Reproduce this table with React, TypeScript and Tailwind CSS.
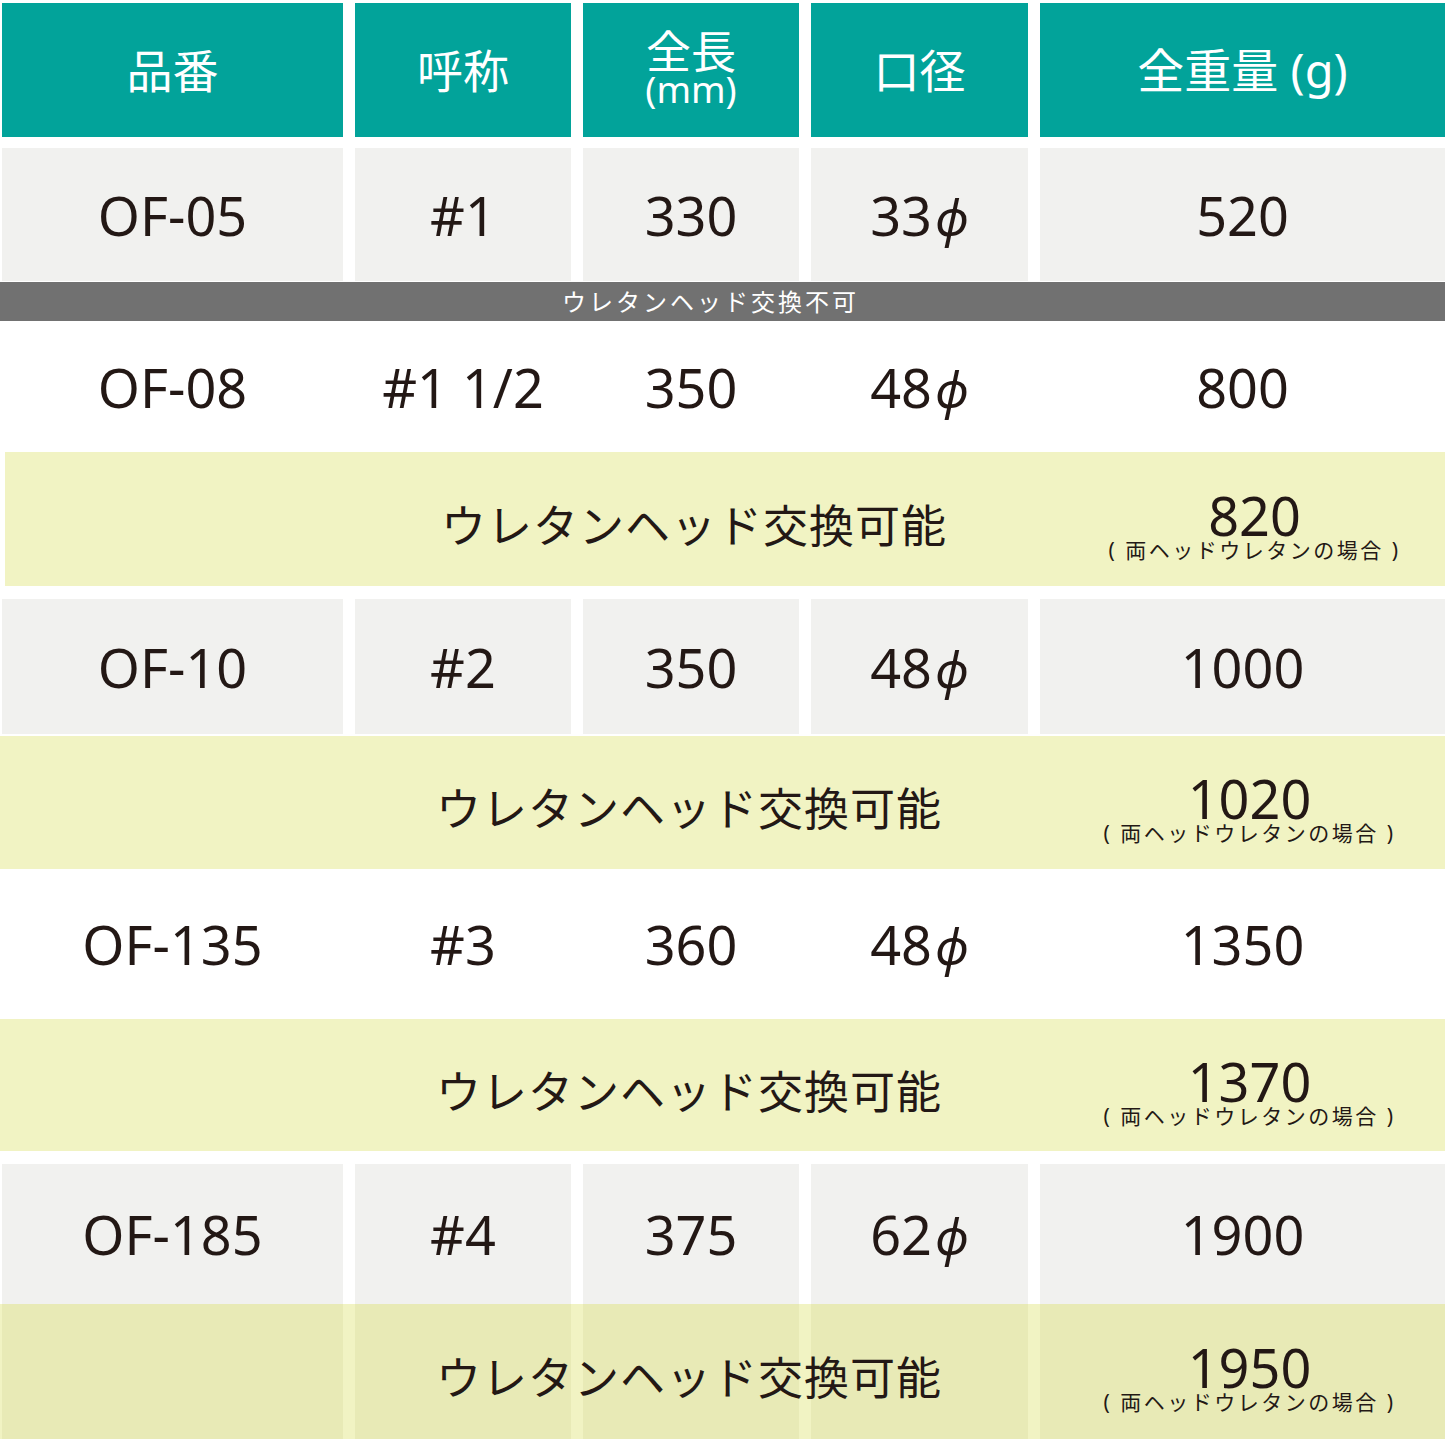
import React from 'react';

const FONT = 'font-["Noto_Sans","Noto_Sans_CJK_JP",sans-serif]';
const COLS = 'grid grid-cols-[341px_216px_216px_217px_405px] gap-x-[12px] pl-[2px]';
const INK = 'text-[#231815]';

interface SpecRow {
  code: string;
  size: string;
  length: string;
  bore: string;
  weight: string;
  shaded: boolean;
  height: string;
}

const Phi: React.FC<{ value: string }> = ({ value }) => (
  <span>
    {value}
    <span className="italic ml-[3px] text-[50px]">ϕ</span>
  </span>
);

const DataRow: React.FC<{ row: SpecRow }> = ({ row }) => {
  const cell = `flex items-center justify-center text-[54px] leading-none ${row.shaded ? 'bg-[#f1f1ef]' : ''}`;
  return (
    <div className={`${COLS} ${row.height}`}>
      <div className={cell}>{row.code}</div>
      <div className={cell}>
        <span className="whitespace-pre">{row.size}</span>
      </div>
      <div className={cell}>{row.length}</div>
      <div className={cell}>
        <Phi value={row.bore} />
      </div>
      <div className={cell}>{row.weight}</div>
    </div>
  );
};

const Weight: React.FC<{ value: string }> = ({ value }) => (
  <div className="flex flex-col items-center pl-[14px] pt-[14px]">
    <span className="text-[54px] leading-[46px]">{value}</span>
    <span className="text-[21px] leading-[22px] tracking-[2.5px] mt-[1px] whitespace-pre">( 両ヘッドウレタンの場合 )</span>
  </div>
);

const UrethaneBand: React.FC<{ weight: string; className?: string; dark?: boolean }> = ({ weight, className, dark }) => (
  <div className={`bg-[#f1f3c3] ${className ?? ''}`}>
    <div className={`${COLS} h-full`}>
      {dark && (
        <>
          <div className="row-start-1 col-start-1 bg-[#e8eab6]" />
          <div className="row-start-1 col-start-2 bg-[#e8eab6]" />
          <div className="row-start-1 col-start-3 bg-[#e8eab6]" />
          <div className="row-start-1 col-start-4 bg-[#e8eab6]" />
          <div className="row-start-1 col-start-5 bg-[#e8eab6]" />
        </>
      )}
      <div className="row-start-1 col-start-1 col-span-4 flex items-center justify-center pl-[348px] pt-[12px]">
        <span className="text-[45px] leading-none tracking-[1px]">ウレタンヘッド交換可能</span>
      </div>
      <div className="row-start-1 col-start-5 flex items-center justify-center">
        <Weight value={weight} />
      </div>
    </div>
  </div>
);

export default function App() {
  return (
    <div className={`w-[1445px] h-[1445px] bg-white pt-[3px] ${FONT} ${INK}`}>
      {/* header */}
      <div className={`${COLS} h-[134px] text-white`}>
        <div className="bg-[#02a39a] flex items-center justify-center text-[46px] leading-none">品番</div>
        <div className="bg-[#02a39a] flex items-center justify-center text-[46px] leading-none">呼称</div>
        <div className="bg-[#02a39a] flex flex-col items-center justify-center">
          <span className="text-[45px] leading-[38px]">全長</span>
          <span className="text-[37px] leading-[36px]">(mm)</span>
        </div>
        <div className="bg-[#02a39a] flex items-center justify-center text-[46px] leading-none">口径</div>
        <div className="bg-[#02a39a] flex items-center justify-center text-[47px] leading-none">全重量 (g)</div>
      </div>

      <div className="mt-[11px]">
        <DataRow row={{ code: 'OF-05', size: '#1', length: '330', bore: '33', weight: '520', shaded: true, height: 'h-[133px]' }} />
      </div>

      <div className="mt-[1px] h-[39px] bg-[#717171] flex items-center justify-center pr-[24px]">
        <span className="text-white text-[24px] leading-none tracking-[3px]">ウレタンヘッド交換不可</span>
      </div>

      <DataRow row={{ code: 'OF-08', size: '#1 1/2', length: '350', bore: '48', weight: '800', shaded: false, height: 'h-[131px]' }} />
      <UrethaneBand weight="820" className="h-[134px] ml-[5px] -mr-[5px]" />

      <div className="mt-[13px]">
        <DataRow row={{ code: 'OF-10', size: '#2', length: '350', bore: '48', weight: '1000', shaded: true, height: 'h-[135px]' }} />
      </div>
      <UrethaneBand weight="1020" className="mt-[2px] h-[133px]" />

      <DataRow row={{ code: 'OF-135', size: '#3', length: '360', bore: '48', weight: '1350', shaded: false, height: 'h-[150px]' }} />
      <UrethaneBand weight="1370" className="h-[132px]" />

      <div className="mt-[13px]">
        <DataRow row={{ code: 'OF-185', size: '#4', length: '375', bore: '62', weight: '1900', shaded: true, height: 'h-[140px]' }} />
      </div>
      <UrethaneBand weight="1950" className="h-[135px]" dark />
    </div>
  );
}
